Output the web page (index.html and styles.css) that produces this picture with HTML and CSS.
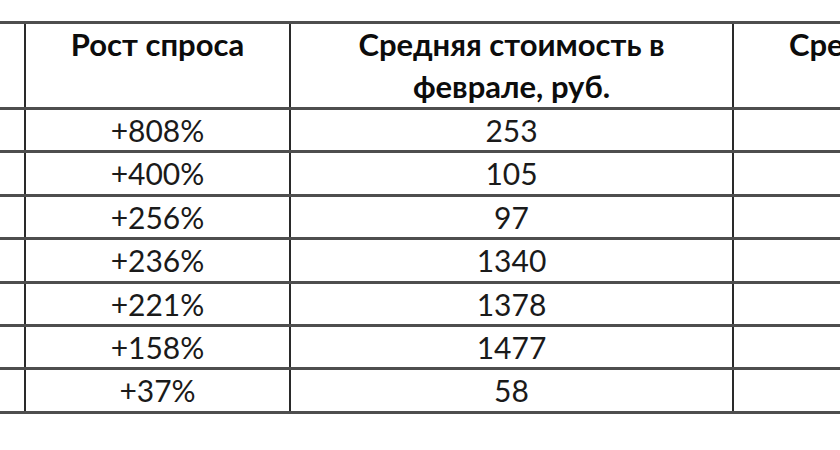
FILE: index.html
```html
<!DOCTYPE html>
<html lang="ru">
<head>
<meta charset="utf-8">
<title>Рост спроса</title>
<link rel="stylesheet" href="styles.css">
</head>
<body>
<div class="viewport">
  <table class="grid">
    <colgroup>
      <col class="c-name">
      <col class="c-growth">
      <col class="c-feb">
      <col class="c-mar">
    </colgroup>
    <thead>
      <tr>
        <th></th>
        <th>Рост спроса<br>&nbsp;</th>
        <th>Средняя стоимость в<br>феврале, руб.</th>
        <th>Средняя стоимость в<br>марте, руб.</th>
      </tr>
    </thead>
    <tbody>
      <tr><td></td><td>+808%</td><td>253</td><td></td></tr>
      <tr><td></td><td>+400%</td><td>105</td><td></td></tr>
      <tr><td></td><td>+256%</td><td>97</td><td></td></tr>
      <tr><td></td><td>+236%</td><td>1340</td><td></td></tr>
      <tr><td></td><td>+221%</td><td>1378</td><td></td></tr>
      <tr><td></td><td>+158%</td><td>1477</td><td></td></tr>
      <tr><td></td><td>+37%</td><td>58</td><td></td></tr>
    </tbody>
  </table>
</div>
</body>
</html>
```
FILE: styles.css
```css
html, body {
  margin: 0;
  padding: 0;
  background: #ffffff;
}

body {
  width: 840px;
  height: 450px;
  overflow: hidden;
}

.viewport {
  padding-top: 21px;
  margin-left: -300px;
}

.grid {
  border-collapse: collapse;
  table-layout: fixed;
  width: 1450px;
  font-family: Lato, "Open Sans", "Noto Sans", sans-serif;
  font-size: 30px;
  color: #1a1a1a;
}

.c-name { width: 324px; }
.c-growth { width: 265px; }
.c-feb { width: 443px; }
.c-mar { width: 418px; }

.grid th,
.grid td {
  padding: 0;
  text-align: center;
  border-top: 3px solid #4e4e4e;
  border-bottom: 3px solid #4e4e4e;
  border-left: 2px solid #2a2a2a;
  border-right: 2px solid #2a2a2a;
  white-space: nowrap;
  overflow: hidden;
}

.grid th {
  font-weight: 700;
  font-size: 31px;
  color: #0c0c0c;
  line-height: 41.5px;
  height: 83px;
  vertical-align: top;
}

.grid td {
  font-weight: 400;
  height: 40.4px;
  line-height: 40.4px;
}
```
